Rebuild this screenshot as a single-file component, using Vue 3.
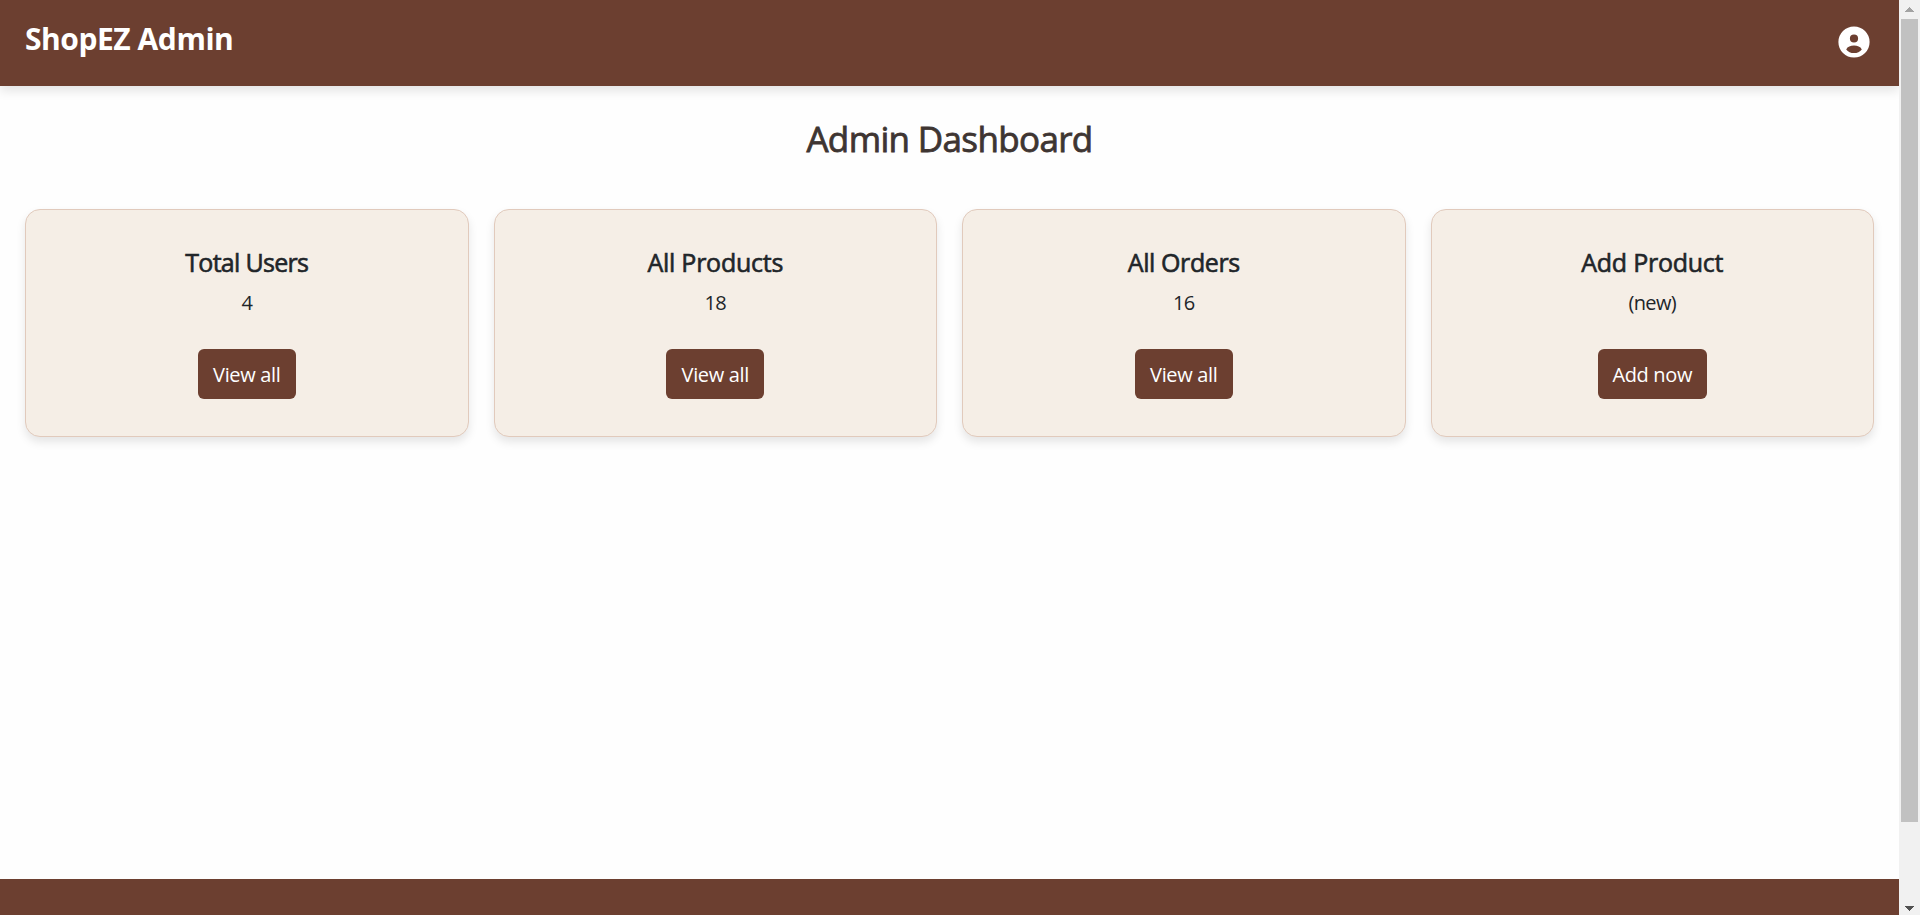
<script setup>
const cards = [
  { title: 'Total Users', value: '4', action: 'View all', kind: 'users' },
  { title: 'All Products', value: '18', action: 'View all', kind: 'products' },
  { title: 'All Orders', value: '16', action: 'View all', kind: 'orders' },
  { title: 'Add Product', value: '(new)', action: 'Add now', kind: 'add' },
]
</script>

<template>
  <div class="window">
    <div class="page">
      <header class="navbar">
        <div class="brand">ShopEZ Admin</div>
        <svg class="account" viewBox="0 0 32 32" aria-label="Account">
          <path
            fill="#fff"
            fill-rule="evenodd"
            d="M16 .4a15.6 15.6 0 1 0 0 31.2A15.6 15.6 0 0 0 16 .4ZM16 8.4a4.1 4.1 0 1 1 0 8.2a4.1 4.1 0 0 1 0-8.2ZM8.2 23.4C9.5 20.8 12.5 19.6 16 19.6s6.5 1.2 7.8 3.8C22 25.8 19.2 27 16 27s-6-1.2-7.8-3.6Z"
          />
        </svg>
      </header>
      <main class="content">
        <h2 class="heading">Admin Dashboard</h2>
        <section class="cards">
          <article v-for="card in cards" :key="card.title" class="card" :class="card.kind">
            <h5 class="title">{{ card.title }}</h5>
            <p class="value">{{ card.value }}</p>
            <button class="action">{{ card.action }}</button>
          </article>
        </section>
      </main>
      <footer class="footer"></footer>
    </div>
    <div class="scrollbar">
      <svg class="arrow" viewBox="0 0 21 19" shape-rendering="crispEdges">
        <path fill="#a3a3a3" d="M10 7h1v1h1v1h1v1h1v1h1v1H6v-1h1v-1h1V9h1V8h1z" />
      </svg>
      <div class="thumb"></div>
      <svg class="arrow down" viewBox="0 0 21 19" shape-rendering="crispEdges">
        <path fill="#505050" d="M6 10h9v1h-1v1h-1v1h-1v1h-1v1h-1v-1H9v-1H8v-1H7v-1H6z" />
      </svg>
    </div>
  </div>
</template>

<style>
body {
  margin: 0;
  overflow: hidden;
}
</style>

<style scoped>
.window {
  display: flex;
  height: 915px;
  font-family: "Open Sans", "Noto Sans", sans-serif;
  color: #212529;
  background: #fefefe;
}
.page {
  flex: 1;
  min-width: 0;
  display: flex;
  flex-direction: column;
  overflow: hidden;
}
.navbar {
  box-sizing: border-box;
  height: 86px;
  flex: none;
  display: flex;
  justify-content: space-between;
  align-items: flex-start;
  padding: 15px 29px 0 25px;
  background: #6c3f30;
  box-shadow: 0 5px 10px rgba(0, 0, 0, 0.1);
}
.brand {
  padding-top: 1px;
  font-size: 30px;
  line-height: 45px;
  font-weight: 700;
  color: #fff;
  letter-spacing: -0.45px;
}
.account {
  width: 32px;
  height: 32px;
  margin-top: 10.5px;
}
.content {
  flex: 1;
  padding: 32px 25px 0;
}
.heading {
  margin: 0 0 49px;
  font-size: 35px;
  line-height: 42px;
  font-weight: 500;
  text-align: center;
  color: #3e3532;
  letter-spacing: -0.65px;
  -webkit-text-stroke: 0.8px currentColor;
}
.cards {
  display: grid;
  grid-template-columns: repeat(4, 1fr);
  gap: 25px;
}
.card {
  box-sizing: border-box;
  height: 228px;
  display: flex;
  flex-direction: column;
  align-items: center;
  padding-top: 37px;
  background: #f5eee6;
  border: 1px solid #e1cabc;
  border-radius: 15px;
  box-shadow: 0 5px 10px rgba(0, 0, 0, 0.1);
}
.title {
  margin: 0 0 11px;
  font-size: 25px;
  line-height: 30px;
  font-weight: 500;
  letter-spacing: -0.25px;
  -webkit-text-stroke: 0.6px currentColor;
}
.users .title {
  letter-spacing: -0.7px;
}
.orders .title {
  letter-spacing: -0.4px;
}
.value {
  margin: 0;
  font-size: 20px;
  line-height: 30px;
  letter-spacing: -0.7px;
}
.action {
  width: 98px;
  height: 50px;
  margin-top: 31px;
  padding: 2px 0 0;
  border: 0;
  border-radius: 6px;
  background: #6c3f30;
  color: #fff;
  font-family: inherit;
  font-size: 20px;
  line-height: 30px;
  letter-spacing: -0.35px;
  white-space: nowrap;
}
.add .action {
  width: 109px;
}
.footer {
  height: 36px;
  flex: none;
  background: #6c3f30;
}
.scrollbar {
  width: 21px;
  display: flex;
  flex-direction: column;
  align-items: center;
  background: #f1f1f1;
}
.arrow {
  width: 21px;
  height: 19px;
  flex: none;
}
.thumb {
  width: 17px;
  height: 803px;
  background: #c1c1c1;
}
.down {
  margin-top: auto;
}
</style>
